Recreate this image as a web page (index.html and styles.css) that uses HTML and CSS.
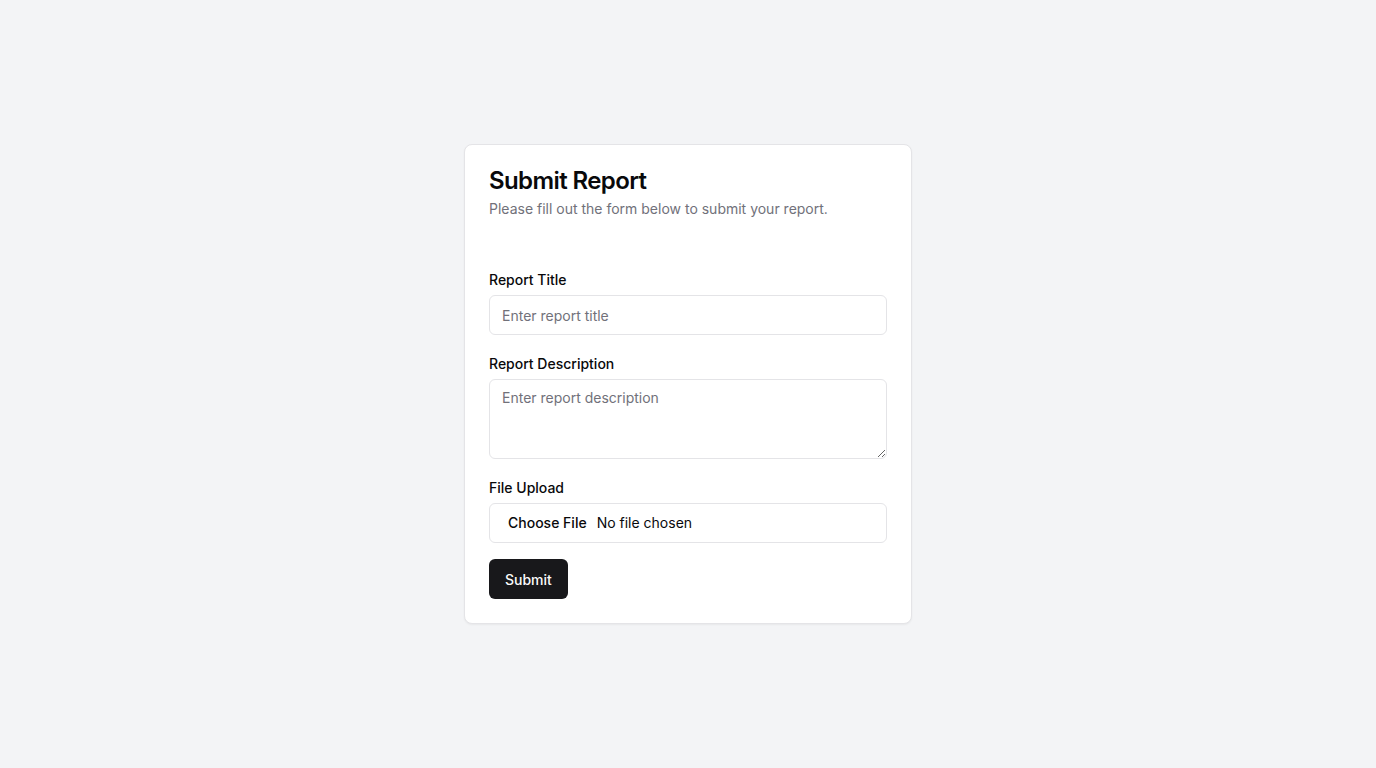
FILE: index.html
```html
<!DOCTYPE html>
<html lang="en">
<head>
<meta charset="utf-8">
<title>Submit Report</title>
<link rel="stylesheet" href="styles.css">
</head>
<body>
<main class="page">
  <div class="card">
    <div class="card-header">
      <h1 class="card-title">Submit Report</h1>
      <p class="card-desc">Please fill out the form below to submit your report.</p>
    </div>
    <form class="card-content">
      <div class="field">
        <label class="label" for="title">Report Title</label>
        <input class="input" id="title" type="text" placeholder="Enter report title">
      </div>
      <div class="field">
        <label class="label" for="desc">Report Description</label>
        <textarea class="input textarea" id="desc" placeholder="Enter report description"></textarea>
      </div>
      <div class="field">
        <label class="label" for="file">File Upload</label>
        <input class="input file" id="file" type="file">
      </div>
      <button class="button" type="button">Submit</button>
    </form>
  </div>
</main>
</body>
</html>
```
FILE: styles.css
```css
* { box-sizing: border-box; }
html, body { margin: 0; padding: 0; }
body {
  background: #f3f4f6;
  font-family: Inter, "Liberation Sans", sans-serif;
  color: #09090b;
}
.page {
  min-height: 100vh;
  display: flex;
  align-items: center;
  justify-content: center;
}
.card {
  width: 448px;
  background: #fff;
  border: 1px solid #e4e4e7;
  border-radius: 8px;
  box-shadow: 0 1px 2px rgba(0,0,0,0.05);
}
.card-header {
  padding: 24px;
  display: flex;
  flex-direction: column;
  gap: 6px;
}
.card-title {
  margin: 0;
  font-size: 24px;
  line-height: 24px;
  font-weight: 600;
  letter-spacing: -0.6px;
}
.card-desc {
  margin: 0;
  font-size: 14px;
  line-height: 20px;
  color: #71717a;
}
.card-content {
  padding: 30px 24px 24px;
  display: flex;
  flex-direction: column;
  gap: 22px;
  align-items: flex-start;
}
.field {
  width: 100%;
  display: flex;
  flex-direction: column;
  gap: 8px;
}
.label {
  font-size: 14px;
  line-height: 14px;
  font-weight: 500;
}
.input {
  width: 100%;
  height: 40px;
  border: 1px solid #e4e4e7;
  border-radius: 6px;
  background: #fff;
  padding: 8px 12px;
  font-family: inherit;
  font-size: 14px;
  line-height: 20px;
  color: #09090b;
  outline: none;
}
.input::placeholder { color: #71717a; }
.textarea {
  height: 80px;
  resize: vertical;
  display: block;
}
.file {
  padding: 9px 12px;
}
.file::file-selector-button {
  border: 0;
  background: transparent;
  font-family: inherit;
  font-size: 14px;
  font-weight: 500;
  color: #09090b;
  padding: 0 6px;
  margin-right: 4px;
}
.button {
  margin-top: -6px;
  height: 40px;
  padding: 0 16px;
  background: #18181b;
  color: #fafafa;
  border: 0;
  border-radius: 6px;
  font-family: inherit;
  font-size: 14px;
  font-weight: 500;
}
```
